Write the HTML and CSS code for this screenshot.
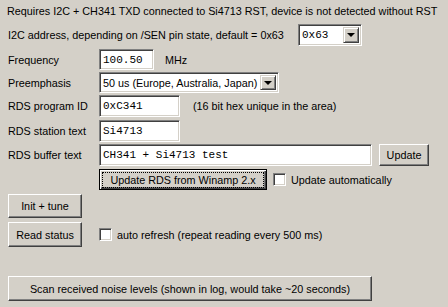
FILE: index.html
```html
<!DOCTYPE html>
<html lang="en">
<head>
    <meta charset="UTF-8">
    <title>Si4713 RDS</title>
    <link rel="stylesheet" href="styles.css">
</head>
<body>
    <div class="panel">
        <div class="row r1">Requires I2C + CH341 TXD connected to Si4713 RST, device is not detected without RST</div>

        <div class="row r2">
            <span class="label wide">I2C address, depending on /SEN pin state, default = 0x63</span>
            <div class="combo addr"><span class="value mono">0x63</span><span class="drop"><i></i></span></div>
        </div>

        <div class="row r3">
            <span class="label">Frequency</span>
            <div class="edit freq mono">100.50</div>
            <span class="unit">MHz</span>
        </div>

        <div class="row r4">
            <span class="label">Preemphasis</span>
            <div class="combo pre"><span class="value">50 us (Europe, Australia, Japan)</span><span class="drop"><i></i></span></div>
        </div>

        <div class="row r5">
            <span class="label">RDS program ID</span>
            <div class="edit short mono">0xC341</div>
            <span class="hint">(16 bit hex unique in the area)</span>
        </div>

        <div class="row r6">
            <span class="label">RDS station text</span>
            <div class="edit short mono">Si4713</div>
        </div>

        <div class="row r7">
            <span class="label">RDS buffer text</span>
            <div class="edit long mono">CH341 + Si4713 test</div>
            <div class="btn update">Update</div>
        </div>

        <div class="row r8">
            <span class="label"></span>
            <div class="btn focused"><span class="focus">Update RDS from Winamp 2.x</span></div>
            <span class="check"></span>
            <span>Update automatically</span>
        </div>

        <div class="row r9">
            <div class="btn side">Init + tune</div>
        </div>

        <div class="row r10">
            <div class="btn side">Read status</div>
            <span class="check auto"></span>
            <span>auto refresh (repeat reading every 500 ms)</span>
        </div>

        <div class="row r11">
            <div class="btn scan">Scan received noise levels (shown in log, would take ~20 seconds)</div>
        </div>
    </div>
</body>
</html>
```

FILE: styles.css
```css
body {
    margin: 0;
    background-color: #d4d0c8;
    font-family: "Liberation Sans", Arial, sans-serif;
    font-size: 10.8px;
    color: #000;
}

.panel {
    padding: 0 0 0 8px;
}

.row {
    display: flex;
    align-items: center;
    white-space: nowrap;
}

.r1 { height: 22px; margin-left: -1px; }
.r2 { height: 22px; margin-top: 2px; }
.r3 { height: 21px; margin-top: 3px; }
.r4 { height: 21px; margin-top: 2px; }
.r5 { height: 22px; margin-top: 2px; }
.r6 { height: 22px; margin-top: 3px; }
.r7 { height: 22px; margin-top: 2px; }
.r8 { height: 21px; margin-top: 3px; }
.r9 { height: 24px; margin-top: 4px; }
.r10 { height: 25px; margin-top: 4px; }
.r11 { height: 25px; margin-top: 29px; }

.label {
    width: 91px;
    flex-shrink: 0;
}

.label.wide {
    width: 290px;
}

.mono {
    font-family: "Liberation Mono", "Courier New", monospace;
    font-size: 11px;
}

.edit {
    box-sizing: border-box;
    height: 100%;
    background: #fff;
    border: 1px solid;
    border-color: #808080 #fff #fff #808080;
    box-shadow: inset 1px 1px #404040, inset -1px -1px #d4d0c8;
    padding: 0 3px;
    display: flex;
    align-items: center;
}

.freq { width: 55px; }
.short { width: 81px; }
.long { width: 273px; }

.unit { margin-left: 11px; }
.hint { margin-left: 13px; }

.combo {
    box-sizing: border-box;
    height: 22px;
    background: #fff;
    border: 1px solid;
    border-color: #808080 #fff #fff #808080;
    box-shadow: inset 1px 1px #404040, inset -1px -1px #d4d0c8;
    padding: 2px;
    display: flex;
    align-items: center;
}

.combo .value {
    flex: 1;
    padding-left: 1px;
}

.addr { width: 64px; }
.pre { width: 180px; }
.r4 .combo { height: 21px; }

.drop {
    box-sizing: border-box;
    width: 16px;
    height: 100%;
    background: #d4d0c8;
    border: 1px solid;
    border-color: #d4d0c8 #404040 #404040 #d4d0c8;
    box-shadow: inset 1px 1px #fff, inset -1px -1px #808080;
    display: flex;
    align-items: center;
    justify-content: center;
}

.drop i {
    width: 0;
    height: 0;
    border-left: 4px solid transparent;
    border-right: 4px solid transparent;
    border-top: 4px solid #000;
    margin-left: -1px;
}

.btn {
    box-sizing: border-box;
    height: 100%;
    background: #d4d0c8;
    border: 1px solid;
    border-color: #fff #404040 #404040 #fff;
    box-shadow: inset -1px -1px #808080;
    display: flex;
    align-items: center;
    justify-content: center;
}

.update {
    width: 50px;
    margin-left: 7px;
}

.focused {
    width: 168px;
    border: 1px solid #000;
    box-shadow: inset 1px 1px #fff, inset -1px -1px #404040, inset -2px -2px #808080;
}

.focus {
    border: 1px dotted #000;
    padding: 1px 3px;
    width: 154px;
    text-align: center;
}

.side { width: 74px; }
.scan { width: 364px; }

.check {
    box-sizing: border-box;
    width: 13px;
    height: 13px;
    background: #fff;
    border: 1px solid;
    border-color: #808080 #fff #fff #808080;
    box-shadow: inset 1px 1px #404040, inset -1px -1px #d4d0c8;
    margin: 0 5px 0 6px;
}

.check.auto {
    margin-left: 17px;
}
```
